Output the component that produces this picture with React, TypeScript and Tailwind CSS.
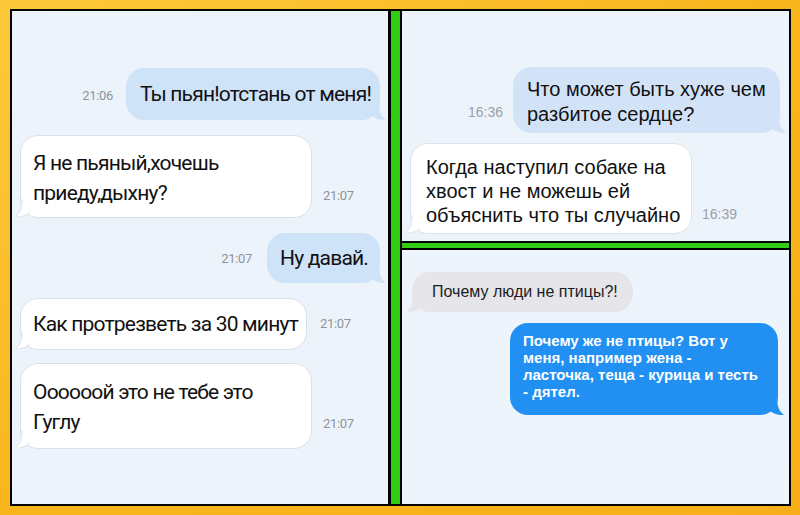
import React from "react";

type Side = "left" | "right";

function Tail({ side, fill, stroke }: { side: Side; fill: string; stroke?: string }) {
  const flip = side === "left";
  return (
    <svg
      width="16"
      height="18"
      viewBox="0 0 16 18"
      className={
        flip
          ? "absolute -left-[6px] bottom-0 -scale-x-100"
          : "absolute -right-[6px] bottom-0"
      }
    >
      <path d="M0 0 H9 C9 9 11 14 16 18 C10 18.5 5 16.5 1 13 Z" fill={fill} />
      {stroke && (
        <path
          d="M9 0 C9 9 11 14 16 18 C10 18.5 5 16.5 1 13"
          fill="none"
          stroke={stroke}
          strokeWidth="1"
        />
      )}
    </svg>
  );
}

function Bubble({
  side,
  className,
  fill,
  stroke,
  children,
}: {
  side: Side;
  className: string;
  fill: string;
  stroke?: string;
  children: React.ReactNode;
}) {
  return (
    <div className={"relative whitespace-nowrap rounded-[18px] " + className}>
      {children}
      <Tail side={side} fill={fill} stroke={stroke} />
    </div>
  );
}

const condensed = { fontFamily: "Roboto, 'Liberation Sans', sans-serif" };
const sans = { fontFamily: "'Liberation Sans', Arial, sans-serif" };

function LeftPanel() {
  return (
    <div
      className="flex w-[379px] shrink-0 flex-col border-r-[3px] border-black bg-[#edf3fb] px-2 pt-[57px] text-[#111]"
      style={condensed}
    >
      <div className="flex items-end justify-end gap-[13px]">
        <span className="mb-[15px] text-[13px] tracking-[-0.3px] text-[#8d939a]">21:06</span>
        <Bubble side="right" fill="#cfe3f8" className="w-[254px] bg-[#cfe3f8] px-[14px] py-[11px] text-[21px] leading-[30px] tracking-[-0.8px]">
          Ты пьян!отстань от меня!
        </Bubble>
      </div>

      <div className="mt-[15px] flex items-end gap-[11px]">
        <Bubble side="left" fill="#ffffff" stroke="#d9e0e8" className="w-[292px] border border-[#d9e0e8] bg-white pb-[9px] pl-[12px] pt-[12px] text-[21px] leading-[30px] tracking-[-0.8px]">
          Я не пьяный,хочешь
          <br />
          приеду,дыхну?
        </Bubble>
        <span className="mb-[13px] text-[13px] tracking-[-0.3px] text-[#8d939a]">21:07</span>
      </div>

      <div className="mt-[15px] flex items-end justify-end gap-[15px]">
        <span className="mb-[15px] text-[13px] tracking-[-0.3px] text-[#8d939a]">21:07</span>
        <Bubble side="right" fill="#cfe3f8" className="w-[113px] bg-[#cfe3f8] px-[13px] py-[10px] text-[21px] leading-[30px] tracking-[-0.8px]">
          Ну давай.
        </Bubble>
      </div>

      <div className="mt-[15px] flex items-center gap-[13px]">
        <Bubble side="left" fill="#ffffff" stroke="#d9e0e8" className="w-[287px] border border-[#d9e0e8] bg-white px-[12px] py-[10px] text-[21px] leading-[30px] tracking-[-0.8px]">
          Как протрезветь за 30 минут
        </Bubble>
        <span className="text-[13px] tracking-[-0.3px] text-[#8d939a]">21:07</span>
      </div>

      <div className="mt-[13px] flex items-end gap-[11px]">
        <Bubble side="left" fill="#ffffff" stroke="#d9e0e8" className="w-[292px] border border-[#d9e0e8] bg-white pb-[11px] pl-[12px] pt-[13px] text-[21px] leading-[30px] tracking-[-0.8px]">
          Оооооой это не тебе это
          <br />
          Гуглу
        </Bubble>
        <span className="mb-[16px] text-[13px] tracking-[-0.3px] text-[#8d939a]">21:07</span>
      </div>
    </div>
  );
}

function TopRightPanel() {
  return (
    <div
      className="flex h-[232px] flex-col border-b-2 border-black bg-[#edf3fb] pl-2 pr-[9px] pt-[56px] text-[#111]"
      style={sans}
    >
      <div className="flex items-end justify-end gap-[10px]">
        <span className="mb-[10px] text-[14px] text-[#9aa0a6]">16:36</span>
        <Bubble side="right" fill="#d3e3f7" className="w-[267px] bg-[#d3e3f7] pb-[6px] pl-[14px] pt-[10px] text-[20px] leading-[25px]">
          Что может быть хуже чем
          <br />
          разбитое сердце?
        </Bubble>
      </div>

      <div className="mt-[10px] flex items-end gap-[10px]">
        <Bubble side="left" fill="#ffffff" stroke="#dde3ea" className="w-[282px] border border-[#dde3ea] bg-white pb-[6px] pl-[15px] pt-[11px] text-[20px] leading-[24px]">
          Когда наступил собаке на
          <br />
          хвост и не можешь ей
          <br />
          объяснить что ты случайно
        </Bubble>
        <span className="mb-[9px] text-[14px] text-[#9aa0a6]">16:39</span>
      </div>
    </div>
  );
}

function BottomRightPanel() {
  return (
    <div
      className="flex flex-1 flex-col border-t-2 border-black bg-[#eef4fc] pl-[10px] pr-[11px] pt-[22px]"
      style={sans}
    >
      <div className="flex">
        <Bubble side="left" fill="#e6e6ea" className="flex h-[40px] w-[221px] items-center bg-[#e6e6ea] pl-[20px] text-[16px] text-[#1c1c1c]">
          Почему люди не птицы?!
        </Bubble>
      </div>
      <div className="mt-[11px] flex justify-end">
        <Bubble side="right" fill="#2190f2" className="w-[268px] bg-[#2190f2] pb-[15px] pl-[13px] pt-[9px] text-[15px] font-bold leading-[17px] text-white">
          Почему же не птицы? Вот у
          <br />
          меня, например жена -
          <br />
          ласточка, теща - курица и тесть
          <br />- дятел.
        </Bubble>
      </div>
    </div>
  );
}

export default function App() {
  return (
    <div className="h-[515px] w-[800px] bg-gradient-to-br from-[#fdc93a] via-[#f9b61c] to-[#f8ae1a] pl-[10px] pt-[9px]">
      <div className="flex h-[497px] w-[781px] border-2 border-black bg-[#33cc14]">
        <LeftPanel />
        <div className="ml-[9px] flex flex-1 flex-col border-l-2 border-black">
          <TopRightPanel />
          <div className="h-[5px] shrink-0" />
          <BottomRightPanel />
        </div>
      </div>
    </div>
  );
}
